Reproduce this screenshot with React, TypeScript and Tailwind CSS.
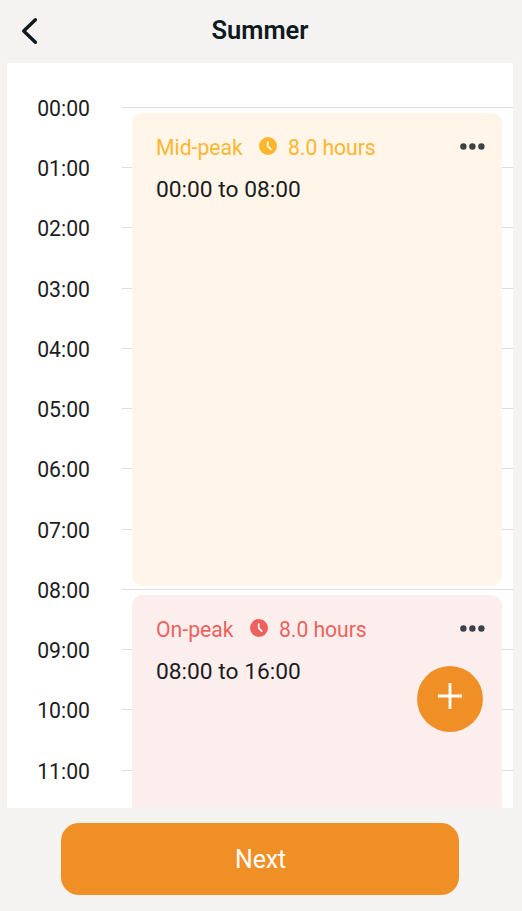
const hours = ['00:00', '01:00', '02:00', '03:00', '04:00', '05:00', '06:00', '07:00', '08:00', '09:00', '10:00', '11:00'];

function Clock() {
  return (
    <svg viewBox="0 0 18 18" className="mb-[3px] h-[18px] w-[18px] shrink-0">
      <circle cx="9" cy="9" r="9" fill="currentColor" />
      <path d="M8.7 5V9.2L11.7 12.2" fill="none" stroke="#fff" strokeWidth="1.7" strokeLinecap="round" />
    </svg>
  );
}

function Dots() {
  return (
    <button aria-label="More" className="mb-[3px] ml-auto text-[#3c4245]">
      <svg viewBox="0 0 25 7" className="block h-[7px] w-[25px]" fill="currentColor">
        <circle cx="3.4" cy="3.5" r="3.2" />
        <circle cx="12.4" cy="3.5" r="3.2" />
        <circle cx="21.4" cy="3.5" r="3.2" />
      </svg>
    </button>
  );
}

type PeriodProps = { name: string; range: string; tone: string; nameWidth: string };

function Period({ name, range, tone, nameWidth }: PeriodProps) {
  return (
    <section className={`rounded-[10px] pt-[20.5px] pr-[17px] pl-6 ${tone}`}>
      <div className="flex h-7 items-center text-[21.2px]">
        <span className={`whitespace-nowrap ${nameWidth}`}>{name}</span>
        <Clock />
        <span className="ml-[11px] whitespace-nowrap tracking-[-0.05px]">8.0 hours</span>
        <Dots />
      </div>
      <p className="mt-[13.5px] text-[22.75px] leading-[30px] text-[#1c1c1e]">{range}</p>
    </section>
  );
}

export default function App() {
  return (
    <div className="flex h-[911px] w-[522px] flex-col overflow-hidden bg-[#f5f3f1] font-['Roboto',sans-serif]">
      <header className="grid h-[63px] shrink-0 grid-cols-[60px_1fr_62px] items-center pb-px">
        <button aria-label="Back" className="pl-[21px]">
          <svg viewBox="0 0 17 28" className="h-7 w-[17px]" fill="none" stroke="#10191d" strokeWidth="3.4" strokeLinecap="round" strokeLinejoin="round">
            <path d="M14.4 2.8L2.7 14L14.4 25.2" />
          </svg>
        </button>
        <h1 className="pb-[2px] text-center text-[25.5px] font-semibold text-[#10191d]">Summer</h1>
      </header>

      <main className="relative mr-[9px] ml-[7px] h-[744.5px] shrink-0 overflow-hidden bg-white pt-[14.2px]">
        {hours.map((hour) => (
          <div key={hour} className="flex h-[60.25px] items-center">
            <span className="w-[114.5px] pt-[3px] pl-[30.2px] text-[21.2px] text-[#1c1c1e]">{hour}</span>
            <span className="h-px flex-1 bg-[#dddde8]" />
          </div>
        ))}
        <div className="absolute top-[50px] right-[11px] left-[125px] grid grid-rows-[473px_473px] gap-[9px]">
          <Period name="Mid-peak" range="00:00 to 08:00" tone="bg-[#fff6e9] text-[#ffb52e]" nameWidth="w-[103px]" />
          <Period name="On-peak" range="08:00 to 16:00" tone="bg-[#fdeeee] text-[#ed625c]" nameWidth="w-[94px]" />
        </div>
        <button aria-label="Add period" className="absolute right-[30px] bottom-[75.5px] flex h-[66.5px] w-[66.5px] items-center justify-center rounded-full bg-[#f08f25]">
          <svg viewBox="0 0 24 26" className="mb-[5px] h-[26px] w-6" stroke="#fff" strokeWidth="2.8">
            <path d="M12 0V26M0 13H24" />
          </svg>
        </button>
      </main>

      <footer className="flex justify-center pt-[15px] pr-[2px]">
        <button className="h-[72.5px] w-[398px] rounded-[18px] bg-[#f08f25] pt-px pl-px text-[25px] tracking-[-0.2px] text-white">Next</button>
      </footer>
    </div>
  );
}
